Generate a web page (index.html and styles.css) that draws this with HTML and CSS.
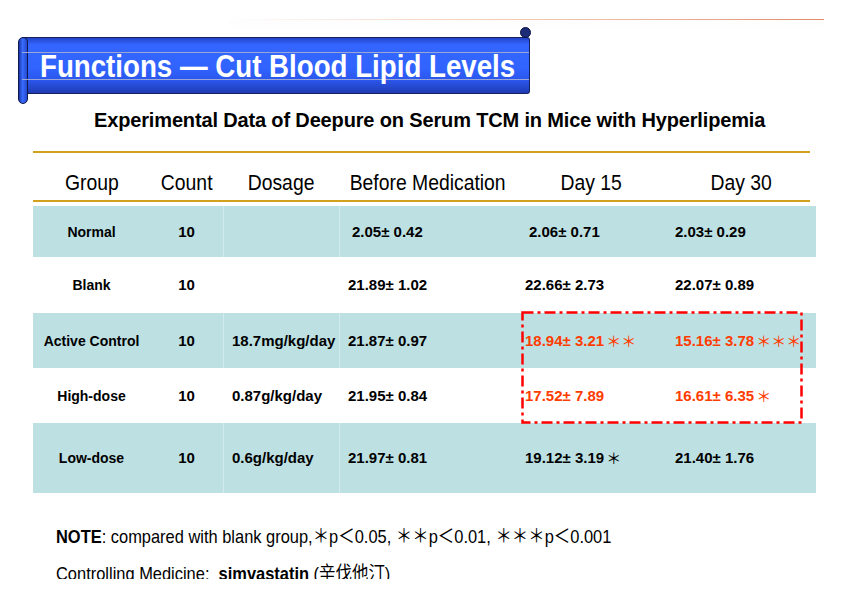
FILE: index.html
```html
<!DOCTYPE html>
<html lang="en">
<head>
<meta charset="utf-8">
<title>Functions — Cut Blood Lipid Levels</title>
<link rel="stylesheet" href="styles.css">
</head>
<body>
<div class="slide">
  <div class="topline"></div>
  <div class="banner">
    <span class="banner-rule rule-a"></span>
    <span class="banner-rule rule-b"></span>
    <h1 class="title">Functions — Cut Blood Lipid Levels</h1>
  </div>
  <h2 class="subtitle">Experimental Data of Deepure on Serum TCM in Mice with Hyperlipemia</h2>

  <div class="table">
    <div class="gold"></div>
    <div class="head">
      <div class="hc"><span>Group</span></div>
      <div class="hc"><span>Count</span></div>
      <div class="hc"><span>Dosage</span></div>
      <div class="hc"><span>Before Medication</span></div>
      <div class="hc"><span>Day 15</span></div>
      <div class="hc"><span>Day 30</span></div>
    </div>
    <div class="gold"></div>

    <div class="tbody">
      <div class="row shade h51">
        <div class="c name">Normal</div>
        <div class="c count">10</div>
        <div class="c val sep"></div>
        <div class="c val sep indent">2.05± 0.42</div>
        <div class="c val indent">2.06± 0.71</div>
        <div class="c val">2.03± 0.29</div>
      </div>
      <div class="row h56">
        <div class="c name">Blank</div>
        <div class="c count">10</div>
        <div class="c val sep"></div>
        <div class="c val sep">21.89± 1.02</div>
        <div class="c val">22.66± 2.73</div>
        <div class="c val">22.07± 0.89</div>
      </div>
      <div class="row shade h55">
        <div class="c name">Active Control</div>
        <div class="c count">10</div>
        <div class="c val sep">18.7mg/kg/day</div>
        <div class="c val sep">21.87± 0.97</div>
        <div class="c val red">18.94± 3.21<span class="star">＊＊</span></div>
        <div class="c val red">15.16± 3.78<span class="star">＊＊＊</span></div>
      </div>
      <div class="row h55">
        <div class="c name">High-dose</div>
        <div class="c count">10</div>
        <div class="c val sep">0.87g/kg/day</div>
        <div class="c val sep">21.95± 0.84</div>
        <div class="c val red">17.52± 7.89</div>
        <div class="c val red">16.61± 6.35<span class="star">＊</span></div>
      </div>
      <div class="row shade h70">
        <div class="c name">Low-dose</div>
        <div class="c count">10</div>
        <div class="c val sep">0.6g/kg/day</div>
        <div class="c val sep">21.97± 0.81</div>
        <div class="c val">19.12± 3.19<span class="star">＊</span></div>
        <div class="c val">21.40± 1.76</div>
      </div>

      <svg class="highlight" width="282" height="113" viewBox="0 0 282 113">
        <rect x="1.5" y="1.5" width="279" height="110" fill="none" stroke="#ff0000" stroke-width="2.5" stroke-dasharray="11 4 3 4"/>
      </svg>
    </div>
  </div>

  <div class="notes">
    <p class="note"><b>NOTE</b>: compared with blank group,＊p＜0.05, ＊＊p＜0.01, ＊＊＊p＜0.001</p>
    <div class="clip">
      <p class="note">Controlling Medicine:&nbsp; <b>simvastatin</b> (辛伐他汀)</p>
    </div>
  </div>
</div>
</body>
</html>
```

FILE: styles.css
```css
html, body {
  margin: 0;
  padding: 0;
  background: #ffffff;
}

.slide {
  width: 842px;
  height: 595px;
  overflow: hidden;
  position: relative;
  font-family: "Liberation Sans", "Noto Sans CJK SC", sans-serif;
  color: #000;
}

.topline {
  margin: 19px 0 0 230px;
  width: 594px;
  height: 1px;
  background: linear-gradient(to right, rgba(246, 214, 196, 0) 0%, #f6d6c4 35%, #eeb49a 70%, #e28a68 100%);
  box-shadow: 0 3px 5px rgba(235, 235, 235, 0.6);
}

/* Blue scroll banner */
.banner {
  position: relative;
  margin: 17px 0 0 22px;
  width: 508px;
  height: 57px;
  box-sizing: border-box;
  border: 1px solid #18225a;
  border-left: none;
  border-radius: 0 3px 3px 0;
  background: linear-gradient(to bottom, #2143c8 0%, #3466ff 12%, #3163ff 55%, #2a55ea 78%, #1f3bb4 100%);
}

.banner::before {
  content: "";
  position: absolute;
  left: -4px;
  top: -1px;
  width: 10px;
  height: 67px;
  box-sizing: border-box;
  border: 1px solid #0f1a4c;
  border-radius: 5px;
  background: linear-gradient(to right, #1a36a8 0%, #3a6cff 45%, #2448d0 100%);
}

.banner::after {
  content: "";
  position: absolute;
  right: -2px;
  top: -11px;
  width: 11px;
  height: 11px;
  box-sizing: border-box;
  border-radius: 50%;
  border: 1px solid #0b1340;
  background: #1c2c78;
}

.banner-rule {
  position: absolute;
  left: 0;
  right: 0;
  height: 1px;
  background: #9aa6d6;
}

.rule-a { top: 14px; }
.rule-b { top: 41px; }

.title {
  position: relative;
  margin: 0;
  padding: 2px 0 0 18px;
  font-size: 32px;
  font-weight: bold;
  line-height: 53px;
  color: #ffffff;
  white-space: nowrap;
  transform: scaleX(0.865);
  transform-origin: 18px 50%;
}

.subtitle {
  margin: 14px 0 0 94px;
  font-size: 20px;
  line-height: 24px;
  font-weight: bold;
  letter-spacing: -0.15px;
  white-space: nowrap;
}

/* Table */
.table {
  margin: 19px 0 0 33px;
  width: 783px;
}

.gold {
  width: 777px;
  height: 2px;
  background: #d4a11e;
}

.head,
.row {
  display: grid;
  grid-template-columns: 117px 73px 116px 177px 150px 150px;
}

.head {
  height: 47px;
  box-sizing: border-box;
  padding-top: 18px;
}

.hc {
  text-align: center;
  font-size: 21.5px;
  line-height: 24px;
  white-space: nowrap;
}

.hc span {
  display: inline-block;
  transform: scaleX(0.9);
  transform-origin: 50% 50%;
}

.tbody {
  position: relative;
  margin-top: 4px;
}

.row {
  align-items: center;
  font-size: 15px;
  font-weight: bold;
  line-height: 18px;
}

.shade { background: #bde0e3; }
.h51 { height: 51px; }
.h56 { height: 56px; }
.h55 { height: 55px; }
.h70 { height: 70px; }

.c {
  white-space: nowrap;
  align-self: stretch;
  display: flex;
  align-items: center;
  box-sizing: border-box;
}

.name {
  justify-content: center;
  font-size: 14px;
}

.count {
  justify-content: center;
}

.val {
  padding-left: 9px;
}

.sep {
  border-left: 1px solid rgba(255, 255, 255, 0.35);
  padding-left: 8px;
}

.indent {
  padding-left: 13px;
}

.sep.indent {
  padding-left: 12px;
}

.red {
  color: #ff3c00;
}

.star {
  font-family: "Noto Sans CJK SC", sans-serif;
  font-weight: normal;
  font-size: 15px;
  margin-left: 2px;
}

.highlight {
  position: absolute;
  left: 488px;
  top: 105px;
}

/* Notes */
.notes {
  margin: 33px 0 0 56px;
}

.note {
  margin: 0;
  font-size: 19px;
  line-height: 22px;
  white-space: nowrap;
  transform: scaleX(0.865);
  transform-origin: 0 50%;
}

.clip {
  margin-top: 15px;
  height: 16px;
  overflow: hidden;
}
```
